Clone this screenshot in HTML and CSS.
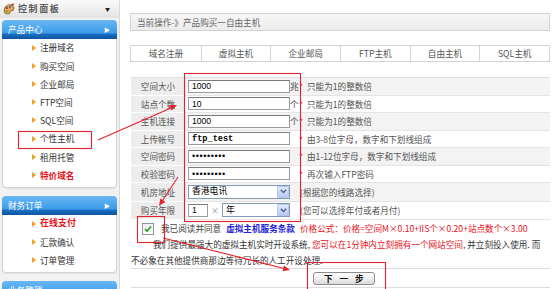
FILE: index.html
```html
<!DOCTYPE html>
<html lang="zh-CN">
<head>
<meta charset="utf-8">
<title>产品购买一自由主机</title>
<link rel="stylesheet" href="styles.css">
</head>
<body>
<div class="page">
  <aside class="side">
    <div class="side-top">
      <svg class="logo" width="12" height="12" viewBox="0 0 12 12">
        <path d="M1 8 Q1 3 5 2 Q10 1 11 5 Q11 8 8 8 Q6 8 7 10 Q7 11 5 11 Q1 11 1 8 Z" fill="#d9a85a" stroke="#8a5a22" stroke-width="0.8"/>
        <circle cx="4" cy="5" r="1.1" fill="#d2232a"/>
        <circle cx="7" cy="4" r="1" fill="#2a62c9"/>
        <circle cx="3.6" cy="8.3" r="0.9" fill="#3aa53a"/>
        <path d="M8 1 L11.5 0.5 L9.5 3.5 Z" fill="#b53a20"/>
      </svg>
      <span class="side-title">控制面板</span>
      <span class="caret">▼</span>
    </div>

    <div class="panel">
      <div class="panel-head"><span>产品中心</span><span class="tri">▶</span></div>
      <ul class="menu">
        <li><span class="bul"></span>注册域名</li>
        <li><span class="bul"></span>购买空间</li>
        <li><span class="bul"></span>企业邮局</li>
        <li><span class="bul"></span>FTP空间</li>
        <li><span class="bul"></span>SQL空间</li>
        <li><span class="bul"></span>个性主机</li>
        <li><span class="bul"></span>租用托管</li>
        <li class="hot"><span class="bul"></span>特价域名</li>
      </ul>
    </div>

    <div class="panel">
      <div class="panel-head"><span>财务订单</span><span class="tri">▶</span></div>
      <ul class="menu">
        <li class="hot big"><span class="bul"></span>在线支付</li>
        <li><span class="bul"></span>汇款确认</li>
        <li><span class="bul"></span>订单管理</li>
      </ul>
    </div>

    <div class="panel">
      <div class="panel-head"><span>业务管理</span><span class="tri">▶</span></div>
    </div>
  </aside>

  <main class="main">
    <div class="crumb">当前操作-》产品购买一自由主机</div>

    <div class="tabs">
      <div class="tab">域名注册</div>
      <div class="tab">虚拟主机</div>
      <div class="tab">企业邮局</div>
      <div class="tab">FTP主机</div>
      <div class="tab">自由主机</div>
      <div class="tab">SQL主机</div>
    </div>

    <div class="form">
      <div class="row alt">
        <div class="lab">空间大小</div>
        <div class="val"><input class="ipt" type="text" value="1000"><span class="unit">兆</span><span class="req">*</span><span class="tip">只能为1的整数倍</span></div>
      </div>
      <div class="row">
        <div class="lab">站点个数</div>
        <div class="val"><input class="ipt" type="text" value="10"><span class="unit">个</span><span class="req">*</span><span class="tip">只能为1的整数倍</span></div>
      </div>
      <div class="row alt">
        <div class="lab">主机连接</div>
        <div class="val"><input class="ipt" type="text" value="1000"><span class="unit">个</span><span class="req">*</span><span class="tip">只能为1的整数倍</span></div>
      </div>
      <div class="row">
        <div class="lab">上传帐号</div>
        <div class="val"><input class="ipt mono" type="text" value="ftp_test"><span class="unit"></span><span class="req">*</span><span class="tip">由3-8位字母，数字和下划线组成</span></div>
      </div>
      <div class="row alt">
        <div class="lab">空间密码</div>
        <div class="val"><input class="ipt pwd" type="password" value="123456789"><span class="unit"></span><span class="req">*</span><span class="tip">由1-12位字母，数字和下划线组成</span></div>
      </div>
      <div class="row">
        <div class="lab">校验密码</div>
        <div class="val"><input class="ipt pwd" type="password" value="123456789"><span class="unit"></span><span class="req">*</span><span class="tip">再次输入FTP密码</span></div>
      </div>
      <div class="row alt tall">
        <div class="lab">机房地址</div>
        <div class="val">
          <span class="sel wide"><span class="sel-text">香港电讯</span><span class="sel-btn"><svg width="7" height="5" viewBox="0 0 7 5"><path d="M0.8 0.8 L3.5 3.6 L6.2 0.8" fill="none" stroke="#4d6185" stroke-width="1.4"/></svg></span></span>
          <span class="tip tip-sel">(根据您的线路选择)</span>
        </div>
      </div>
      <div class="row tall">
        <div class="lab">购买年限</div>
        <div class="val">
          <input class="ipt short" type="text" value="1"><span class="times">×</span>
          <span class="sel narrow"><span class="sel-text">年</span><span class="sel-btn"><svg width="7" height="5" viewBox="0 0 7 5"><path d="M0.8 0.8 L3.5 3.6 L6.2 0.8" fill="none" stroke="#4d6185" stroke-width="1.4"/></svg></span></span>
          <span class="tip tip-sel">(您可以选择年付或者月付)</span>
        </div>
      </div>
      <div class="chk-row">
        <span class="chk"><svg width="8" height="8" viewBox="0 0 8 8"><path d="M1 4 L3 6.2 L7 1.5" fill="none" stroke="#21a121" stroke-width="1.6"/></svg></span>
        <span class="agree">我已阅读并同意</span>
        <a class="terms">虚拟主机服务条款</a>
        <span class="price">价格公式：价格=空间M×0.10+IIS个×0.20+站点数个×3.00</span>
      </div>
      <p class="intro">我们提供最强大的虚拟主机实时开设系统, <span class="red">您可以在1分钟内立刻拥有一个网站空间</span>, 并立刻投入使用. 而<br>不必象在其他提供商那边等待冗长的人工开设处理.</p>
      <div class="btn-row"><button class="btn" type="button">下 一 步</button></div>
    </div>
  </main>

  <svg class="annot" width="553" height="289" viewBox="0 0 553 289">
    <g fill="none" stroke="#e3222c" stroke-width="1.1">
      <rect x="18.5" y="131.5" width="73" height="17"/>
      <rect x="184.5" y="73.5" width="116" height="148"/>
      <rect x="137.5" y="216.5" width="27" height="26"/>
      <rect x="307.5" y="262.5" width="78" height="30"/>
      <line x1="98" y1="140" x2="171" y2="108"/>
      <line x1="178" y1="177" x2="162.5" y2="200.5"/>
      <line x1="163" y1="238" x2="284" y2="268.5"/>
    </g>
    <g fill="#e3222c">
      <polygon points="177,105 171.8,110.5 169.4,105.1"/>
      <polygon points="159,206 165.3,201.7 160.3,198.5"/>
      <polygon points="290,270 282.5,271.2 283.9,265.4"/>
    </g>
  </svg>
</div>
</body>
</html>
```

FILE: styles.css
```css
* { box-sizing: border-box; margin: 0; padding: 0; }
html, body { width: 553px; height: 289px; overflow: hidden; background: #fff; }
body {
  font-family: "Noto Sans CJK SC", "Noto Sans", sans-serif;
  font-size: 8.6px;
  line-height: 1.2;
  color: #333;
}
.page { position: relative; display: flex; width: 553px; height: 289px; }

/* sidebar */
.side {
  width: 120px;
  flex: none;
  background: #f2f2f2;
  border-right: 1px solid #d9d9d9;
  display: flex;
  flex-direction: column;
}
.side-top {
  height: 18px;
  flex: none;
  display: flex;
  align-items: center;
  padding-left: 3px;
  background: linear-gradient(#fbfbfb, #e3e3e3);
}
.logo { flex: none; }
.side-title { margin-left: 3px; font-size: 9px; font-weight: bold; letter-spacing: 1.6px; color: #5a5a5a; }
.caret { margin-left: auto; margin-right: 9px; font-size: 5px; color: #222; }

.panel {
  flex: none;
  margin: 2px 2px 0 2px;
  background: #fff;
  border: 1px solid #d3d3d3;
  border-radius: 4px;
  box-shadow: 0 1px 2px rgba(0, 0, 0, 0.08);
  padding-bottom: 3px;
}
.panel + .panel { margin-top: 8px; }
.panel-head {
  height: 18.5px;
  margin: -1px -1px 0 -1px;
  display: flex;
  align-items: center;
  justify-content: space-between;
  padding: 0 7px 0 6px;
  color: #fff;
  border-radius: 4px 4px 0 0;
  background: linear-gradient(#68b8f5 0%, #3d9ce9 68%, #1b6fc2 74%, #0c55a0 100%);
}
.tri { font-size: 6px; }
.menu { list-style: none; }
.menu li { height: 18.2px; display: flex; align-items: center; padding-left: 29px; color: #333; }
.menu li.hot { color: #e8101a; font-weight: bold; }
.menu li.big { font-size: 9px; }
.bul {
  width: 0; height: 0;
  border-left: 4px solid #f0a020;
  border-top: 3px solid transparent;
  border-bottom: 3px solid transparent;
  margin-right: 4px;
}

/* main */
.main { flex: 1; padding: 13px 3px 0 10px; }
.crumb {
  height: 18px;
  border: 1px solid #d2d2d2;
  background: linear-gradient(#f6f6f6, #ececec);
  color: #666;
  padding-left: 6px;
  display: flex;
  align-items: center;
}
.tabs {
  margin-top: 14px;
  height: 17px;
  display: grid;
  grid-template-columns: repeat(6, 1fr);
  border: 1px solid #d3d3d3;
}
.tab { display: flex; align-items: center; justify-content: center; color: #555; border-left: 1px solid #d3d3d3; }
.tab:first-child { border-left: none; }

.form { margin: 15px 0 0 1px; border-top: 1px solid #dedede; }
.row { display: flex; height: 17.5px; border-bottom: 1px solid #e4e4e4; }
.row.tall { height: 18.5px; }
.lab {
  width: 54px; flex: none;
  background: #ededed;
  color: #555;
  display: flex; align-items: center; justify-content: center;
  border-bottom: 1px solid #fff;
  margin-bottom: -1px;
}
.val { flex: 1; display: flex; align-items: center; padding-left: 3px; }
.row.alt .val { background: #f3f3f3; }

.ipt {
  width: 102px; height: 13px;
  border: 1px solid #9c9c9c;
  border-top-color: #7a7a7a;
  background: #fff;
  font-family: "Liberation Sans", sans-serif;
  font-size: 8.6px;
  color: #000;
  padding: 0 3px;
  outline: none;
}
.ipt.mono { font-family: "Liberation Mono", monospace; font-weight: bold; }
.ipt.pwd { font-size: 9px; letter-spacing: 0.6px; }
.ipt.short { width: 20px; }
.unit { width: 9px; flex: none; color: #444; }
.req { width: 5px; flex: none; color: #e8101a; }
.tip { margin-left: 3px; color: #555; white-space: nowrap; }
.tip-sel { margin-left: 10px; }
.times { width: 14px; text-align: center; color: #999; }

.sel {
  display: flex; align-items: center;
  height: 14px;
  border: 1px solid #7f9db9;
  background: #fff;
}
.sel.wide { width: 102px; }
.sel.narrow { width: 68px; }
.sel-text { flex: 1; padding-left: 3px; color: #000; font-size: 8.8px; }
.sel-btn {
  width: 12px; height: 12px;
  display: flex; align-items: center; justify-content: center;
  background: linear-gradient(#e3ebfd, #b7caf4);
  border: 1px solid #b3c6ee;
  border-radius: 1px;
}

.chk-row { height: 17px; display: flex; align-items: center; padding-left: 11px; white-space: nowrap; }
.chk {
  width: 12px; height: 12px; flex: none;
  border: 1px solid #8a98a6;
  background: linear-gradient(#f0f0f0, #ffffff);
  display: flex; align-items: center; justify-content: center;
}
.agree { margin-left: 7px; color: #444; }
.terms { margin-left: 5px; color: #1a22d8; font-weight: bold; }
.price { margin-left: 5px; color: #e8101a; }

.intro { line-height: 15.5px; height: 31px; text-indent: 22px; color: #333; white-space: nowrap; }
.red { color: #e8101a; }

.btn-row {
  height: 20px;
  border-top: 1px solid #dcdcdc;
  border-bottom: 1px solid #dcdcdc;
  display: flex; align-items: center; justify-content: center;
  padding-left: 7px;
}
.btn {
  width: 62px; height: 13px;
  border: 1px solid #8c8c8c;
  border-radius: 3px;
  background: linear-gradient(#ffffff, #dcdcdc);
  font-family: "Noto Sans CJK SC", sans-serif;
  font-size: 8.6px;
  font-weight: bold;
  line-height: 11px;
  letter-spacing: 2.5px;
  padding-left: 2px;
  color: #111;
}

.annot { position: absolute; left: 0; top: 0; pointer-events: none; }
```
